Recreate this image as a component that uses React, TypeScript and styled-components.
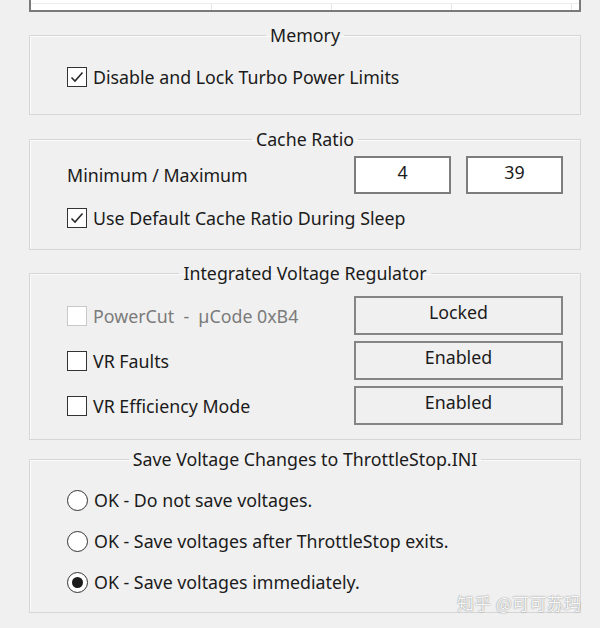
import React from "react";
import styled, { createGlobalStyle } from "styled-components";

const Global = createGlobalStyle`
  html, body { margin: 0; padding: 0; background: #f0f0f0; }
  body { font-family: "Noto Sans", "Open Sans", sans-serif; color: #1b1b1b; }
`;

const FS = 17.8;

const Page = styled.div`
  position: relative;
  width: 600px;
  height: 628px;
  overflow: hidden;
  padding-left: 29px;
  box-sizing: border-box;
  display: flex;
  flex-direction: column;
`;

const Table = styled.div`
  width: 552px;
  height: 12px;
  box-sizing: border-box;
  border: 2px solid #7a7a7a;
  border-top: none;
  background: #fff;
  display: grid;
  grid-template-columns: 181px 120px 120px 120px 1fr;
`;

const Cell = styled.div<{ $last?: boolean }>`
  margin-top: 3px;
  border-top: 1px solid #ececec;
  border-right: ${(p) => (p.$last ? "none" : "1px solid #e6e6e6")};
`;

const Group = styled.fieldset<{ $mt: number; $pt: number; $pb: number; $gap: number }>`
  margin: ${(p) => p.$mt}px 0 0 0;
  width: 552px;
  box-sizing: border-box;
  border: 1px solid #d6d6d6;
  box-shadow: inset 1px 1px 0 #fafafa;
  padding: ${(p) => p.$pt}px 27px ${(p) => p.$pb}px 27px;
  display: flex;
  flex-direction: column;
  gap: ${(p) => p.$gap}px;
  min-width: 0;
`;

const Legend = styled.legend`
  margin: 0 auto;
  padding: 0 4px;
  font-size: ${FS}px;
  line-height: 22px;
  height: 22px;
  color: #1b1b1b;
`;

const Row = styled.div<{ $h: number }>`
  display: flex;
  align-items: center;
  height: ${(p) => p.$h}px;
  margin: 0 -10px 0 10px;
`;

const Label = styled.span<{ $disabled?: boolean }>`
  font-size: ${FS}px;
  line-height: 22px;
  color: ${(p) => (p.$disabled ? "#7b7b7b" : "#1b1b1b")};
  white-space: pre;
`;

const Spacer = styled.div`
  flex: 1;
`;

const Box = styled.span<{ $disabled?: boolean }>`
  width: 20px;
  height: 20px;
  box-sizing: border-box;
  border: 1px solid ${(p) => (p.$disabled ? "#c8c8c8" : "#333")};
  background: #fff;
  margin-right: 6px;
  display: flex;
  align-items: center;
  justify-content: center;
  flex: none;
`;

const Radio = styled.span`
  width: 21px;
  height: 21px;
  box-sizing: border-box;
  border: 1.5px solid #333;
  border-radius: 50%;
  background: #fff;
  margin-right: 6px;
  display: flex;
  align-items: center;
  justify-content: center;
  flex: none;
`;

const Dot = styled.span`
  width: 11px;
  height: 11px;
  border-radius: 50%;
  background: #1b1b1b;
`;

const Field = styled.div<{ $ml: number }>`
  width: 97px;
  height: 38px;
  box-sizing: border-box;
  margin-left: ${(p) => p.$ml}px;
  border: 2px solid #7d7d7d;
  background: #fff;
  display: flex;
  justify-content: center;
  padding-top: 3px;
  font-size: ${FS}px;
  line-height: 22px;
`;

const Button = styled.div`
  width: 209px;
  height: 39px;
  box-sizing: border-box;
  border: 2px solid #858585;
  background: #f0f0f0;
  display: flex;
  justify-content: center;
  padding-top: 3px;
  font-size: ${FS}px;
  line-height: 22px;
`;

const Watermark = styled.div`
  position: absolute;
  left: 457px;
  top: 591px;
  font-family: "Noto Sans CJK SC", sans-serif;
  font-size: 17px;
  line-height: 24px;
  color: rgba(255, 255, 255, 0.95);
  text-shadow: 0 0 1px rgba(0, 0, 0, 0.35), 0 0 2px rgba(0, 0, 0, 0.25);
  letter-spacing: 0.3px;
`;

const Check = () => (
  <svg width="16" height="16" viewBox="0 0 16 16">
    <polyline points="2.5,8.5 6,12 13.5,3.5" fill="none" stroke="#2a2a2a" strokeWidth="1.6" />
  </svg>
);

const CheckRow = ({ label, checked, disabled }: { label: string; checked?: boolean; disabled?: boolean }) => (
  <>
    <Box $disabled={disabled}>{checked && <Check />}</Box>
    <Label $disabled={disabled}>{label}</Label>
  </>
);

const RadioRow = ({ label, checked }: { label: string; checked?: boolean }) => (
  <Row $h={22}>
    <Radio>{checked && <Dot />}</Radio>
    <Label>{label}</Label>
  </Row>
);

export default function App() {
  return (
    <>
      <Global />
      <Page>
        <Table>
          <Cell />
          <Cell />
          <Cell />
          <Cell />
          <Cell $last />
        </Table>

        <Group $mt={12} $pt={20} $pb={26} $gap={0}>
          <Legend>Memory</Legend>
          <Row $h={22}>
            <CheckRow label="Disable and Lock Turbo Power Limits" checked />
          </Row>
        </Group>

        <Group $mt={13} $pt={6} $pb={20} $gap={13}>
          <Legend>Cache Ratio</Legend>
          <Row $h={38}>
            <Label>Minimum / Maximum</Label>
            <Spacer />
            <Field $ml={0}>4</Field>
            <Field $ml={15}>39</Field>
          </Row>
          <Row $h={22}>
            <CheckRow label="Use Default Cache Ratio During Sleep" checked />
          </Row>
        </Group>

        <Group $mt={12} $pt={12} $pb={14} $gap={6}>
          <Legend>Integrated Voltage Regulator</Legend>
          <Row $h={39}>
            <CheckRow label="PowerCut  -  µCode 0xB4" disabled />
            <Spacer />
            <Button>Locked</Button>
          </Row>
          <Row $h={39}>
            <CheckRow label="VR Faults" />
            <Spacer />
            <Button>Enabled</Button>
          </Row>
          <Row $h={39}>
            <CheckRow label="VR Efficiency Mode" />
            <Spacer />
            <Button>Enabled</Button>
          </Row>
        </Group>

        <Group $mt={8} $pt={19} $pb={19} $gap={19}>
          <Legend>Save Voltage Changes to ThrottleStop.INI</Legend>
          <RadioRow label="OK - Do not save voltages." />
          <RadioRow label="OK - Save voltages after ThrottleStop exits." />
          <RadioRow label="OK - Save voltages immediately." checked />
        </Group>

        <Watermark>知乎 @可可苏玛</Watermark>
      </Page>
    </>
  );
}
